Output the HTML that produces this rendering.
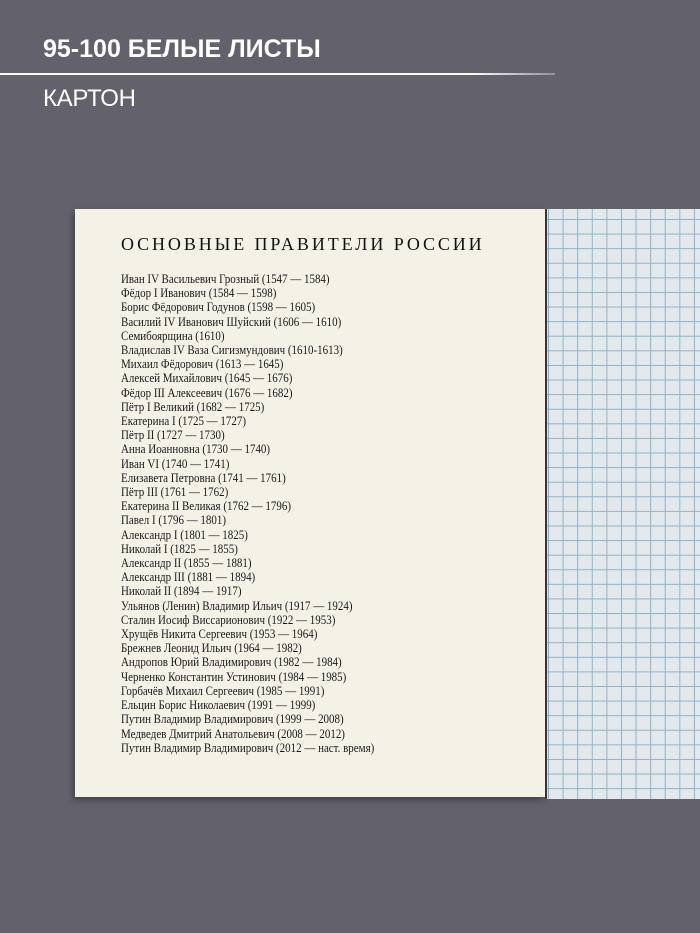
<!DOCTYPE html>
<html><head><meta charset="utf-8"><style>
body{margin:0;width:700px;height:933px;background:#63616b;position:relative;overflow:hidden;font-family:"Liberation Sans",sans-serif}
.h1{position:absolute;left:43px;top:35px;color:#fff;font-weight:bold;font-size:25px;letter-spacing:0px}
.line{position:absolute;left:0;top:73px;width:555px;height:2px;background:linear-gradient(90deg,#fff 85%,rgba(255,255,255,0.3))}
.h2{position:absolute;left:43px;top:85px;color:#fff;font-size:24px;letter-spacing:-0.3px}
.page{position:absolute;left:75px;top:209px;width:470px;height:588px;background:#f4f1e6;box-shadow:-2px 3px 6px rgba(0,0,0,0.35)}
.grid{position:absolute;left:545px;top:209px;width:155px;height:590px;background-color:#e3e8ec;background-image:linear-gradient(90deg,#8fb2c8 1px,transparent 1px),linear-gradient(#8fb2c8 1px,transparent 1px);background-size:14.6px 14.6px;background-position:1px 10px;border-left:2px solid #3a3838}
.title{position:absolute;left:121px;top:234px;font-family:"Liberation Serif",serif;font-size:18px;letter-spacing:2.9px;color:#111}
.list{position:absolute;left:121px;top:272px;font-family:"Liberation Serif",serif;font-size:12.2px;line-height:14.2px;color:#1a1a1a;transform:scaleX(0.9);transform-origin:left top;white-space:nowrap}
</style></head><body>
<div class="h1">95-100 БЕЛЫЕ ЛИСТЫ</div>
<div class="line"></div>
<div class="h2">КАРТОН</div>
<div class="grid"></div>
<div class="page"></div>
<div class="title">ОСНОВНЫЕ ПРАВИТЕЛИ РОССИИ</div>
<div class="list">
Иван IV Васильевич Грозный (1547 — 1584)<br>
Фёдор I Иванович (1584 — 1598)<br>
Борис Фёдорович Годунов (1598 — 1605)<br>
Василий IV Иванович Шуйский (1606 — 1610)<br>
Семибоярщина (1610)<br>
Владислав IV Ваза Сигизмундович (1610-1613)<br>
Михаил Фёдорович (1613 — 1645)<br>
Алексей Михайлович (1645 — 1676)<br>
Фёдор III Алексеевич (1676 — 1682)<br>
Пётр I Великий (1682 — 1725)<br>
Екатерина I (1725 — 1727)<br>
Пётр II (1727 — 1730)<br>
Анна Иоанновна (1730 — 1740)<br>
Иван VI (1740 — 1741)<br>
Елизавета Петровна (1741 — 1761)<br>
Пётр III (1761 — 1762)<br>
Екатерина II Великая (1762 — 1796)<br>
Павел I (1796 — 1801)<br>
Александр I (1801 — 1825)<br>
Николай I (1825 — 1855)<br>
Александр II (1855 — 1881)<br>
Александр III (1881 — 1894)<br>
Николай II (1894 — 1917)<br>
Ульянов (Ленин) Владимир Ильич (1917 — 1924)<br>
Сталин Иосиф Виссарионович (1922 — 1953)<br>
Хрущёв Никита Сергеевич (1953 — 1964)<br>
Брежнев Леонид Ильич (1964 — 1982)<br>
Андропов Юрий Владимирович (1982 — 1984)<br>
Черненко Константин Устинович (1984 — 1985)<br>
Горбачёв Михаил Сергеевич (1985 — 1991)<br>
Ельцин Борис Николаевич (1991 — 1999)<br>
Путин Владимир Владимирович (1999 — 2008)<br>
Медведев Дмитрий Анатольевич (2008 — 2012)<br>
Путин Владимир Владимирович (2012 — наст. время)
</div>
</body></html>
